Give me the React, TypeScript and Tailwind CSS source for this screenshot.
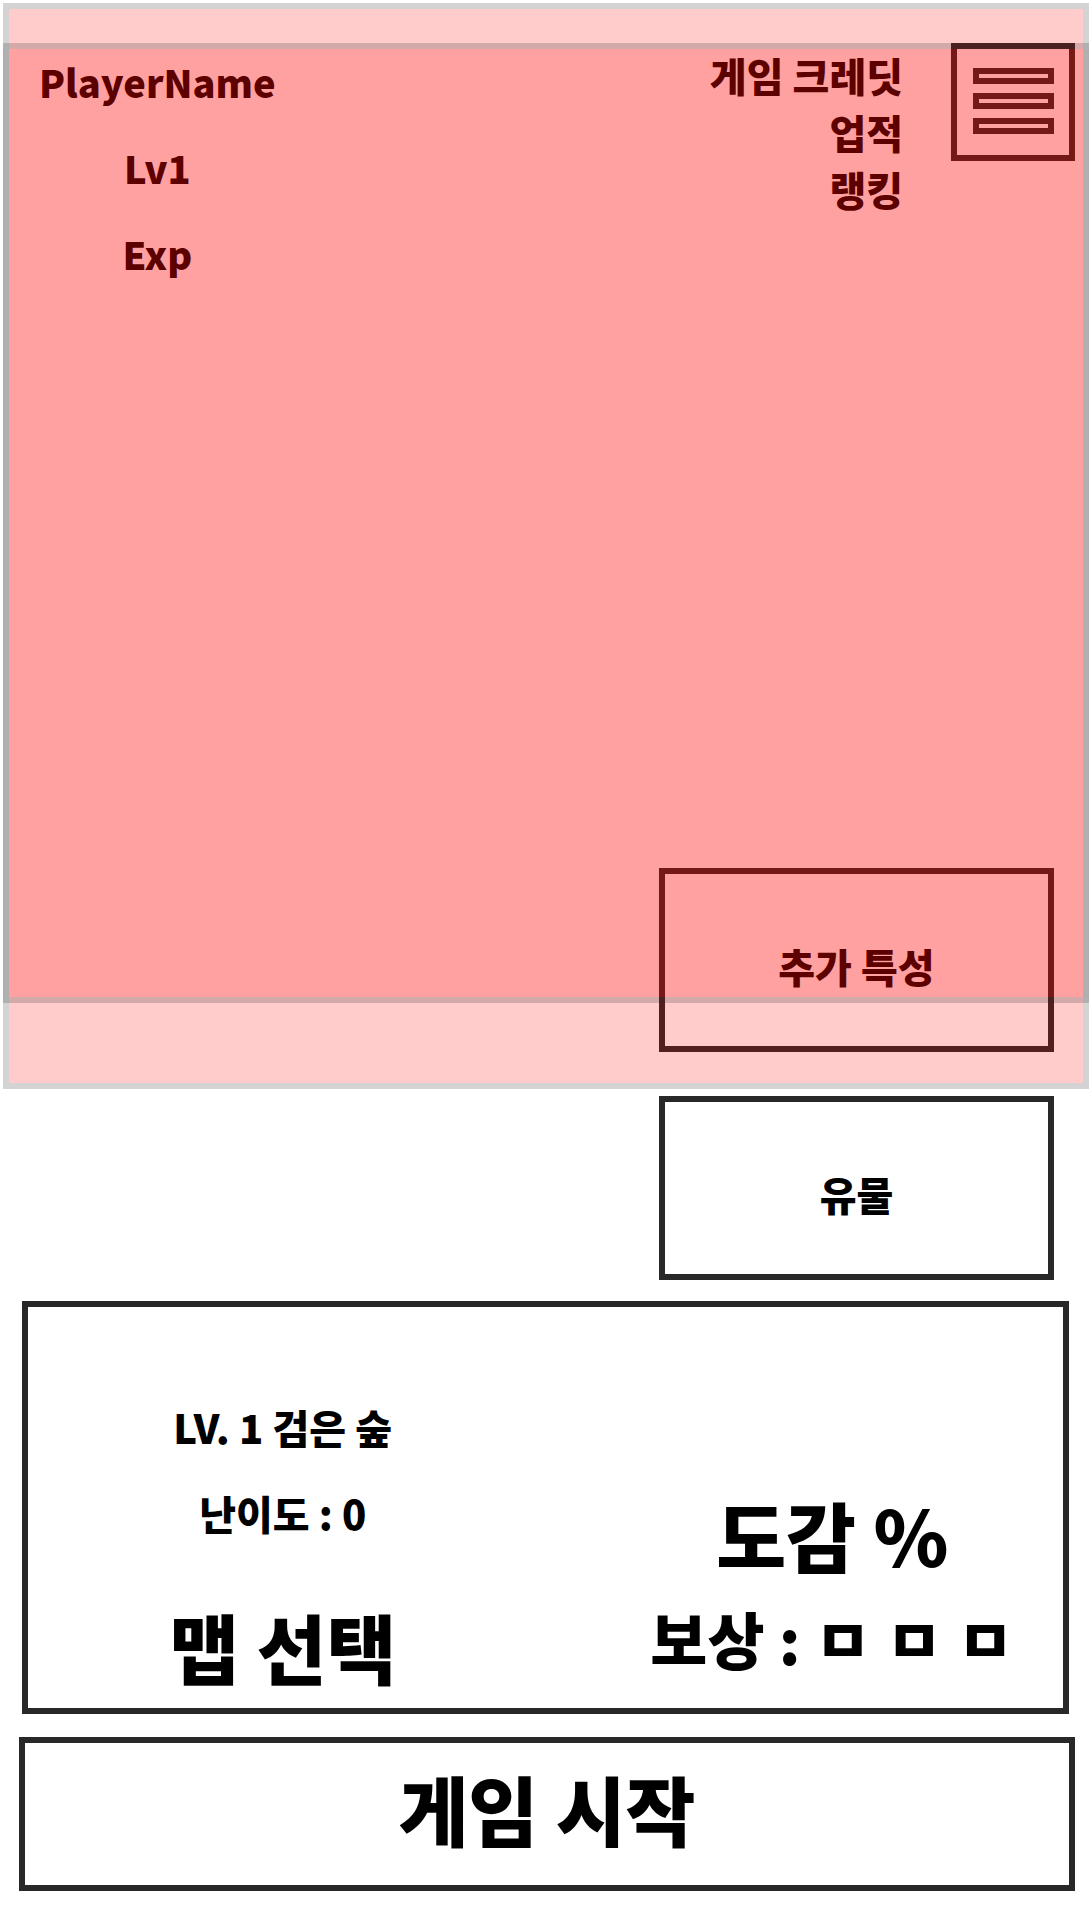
import React from "react";

const boxButton =
  "flex h-[184px] w-[395px] items-center justify-center border-6 border-[#282828] pt-3 text-[40px] leading-none";

function MenuBar() {
  return <span className="block h-4 w-full border-6 border-[#282828]" />;
}

function Header() {
  return (
    <header className="flex items-start justify-between pt-10 pr-3.5 pl-9">
      <div className="-mt-1 flex flex-col items-center text-[38px] leading-[86px]">
        <h1>PlayerName</h1>
        <p>Lv1</p>
        <p>Exp</p>
      </div>
      <div className="flex items-start gap-12">
        <nav className="flex flex-col items-end pt-1 text-[40px] leading-[57px]">
          <a href="#credits">게임 크레딧</a>
          <a href="#achievements">업적</a>
          <a href="#ranking">랭킹</a>
        </nav>
        <button
          type="button"
          aria-label="메뉴"
          className="flex h-[118px] w-[124px] flex-col gap-[9px] border-6 border-[#282828] pr-[15px] pl-4 pt-[19px]"
        >
          <MenuBar />
          <MenuBar />
          <MenuBar />
        </button>
      </div>
    </header>
  );
}

function MapPanel() {
  return (
    <section className="mt-[21px] mr-5 ml-[19px] grid min-h-[413px] grid-cols-2 border-6 border-[#282828]">
      <div className="flex flex-col items-center justify-end pr-2 pb-2">
        <p className="text-[40px] leading-[86px]">LV. 1 검은 숲</p>
        <p className="text-[40px] leading-[86px]">난이도 : 0</p>
        <button type="button" className="mt-9 text-[76px] leading-[108px]">
          맵 선택
        </button>
      </div>
      <div className="flex flex-col items-center justify-end pb-4 pl-14">
        <p className="text-[76px] leading-[100px]">도감 %</p>
        <p className="text-[62px] leading-[108px]">보상 : ㅁ ㅁ ㅁ</p>
      </div>
    </section>
  );
}

export default function App() {
  return (
    <main className="min-h-screen bg-white p-[3px] font-['Noto_Sans_CJK_KR',sans-serif] font-black whitespace-nowrap text-black">
      <section className="relative flex min-h-[1086px] flex-col justify-between">
        <Header />
        <div className="flex justify-end pr-[35px] pb-[37px]">
          <button type="button" className={boxButton}>
            추가 특성
          </button>
        </div>
        {/* Translucent tints: full hero area and the safe area inside it */}
        <div className="pointer-events-none absolute inset-0 border-6 border-[#282828] bg-[#ff0000] opacity-20" />
        <div className="pointer-events-none absolute inset-x-0 top-10 bottom-[86px] border-6 border-[#282828] bg-[#ff0000] opacity-20" />
      </section>
      <div className="flex justify-end pt-[7px] pr-[35px]">
        <button type="button" className={boxButton}>
          유물
        </button>
      </div>
      <MapPanel />
      <div className="mt-[23px] mr-3.5 ml-4">
        <button
          type="button"
          className="flex min-h-[154px] w-full items-center justify-center border-6 border-[#282828] pb-3 text-[76px] leading-none"
        >
          게임 시작
        </button>
      </div>
    </main>
  );
}
